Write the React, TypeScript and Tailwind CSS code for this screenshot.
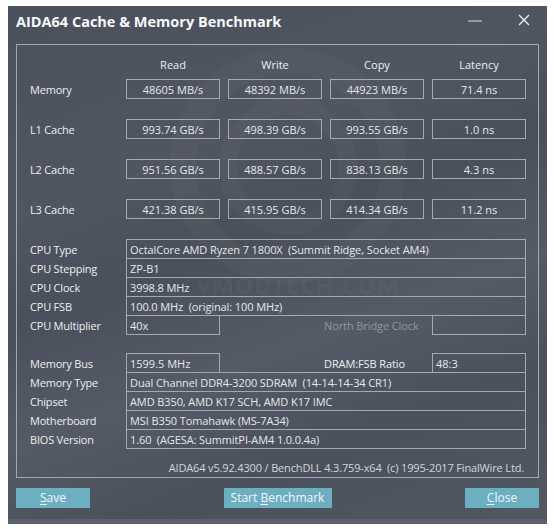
import React from "react";

const font = { fontFamily: '"Open Sans", "Noto Sans", Arial, sans-serif' };

function ValueBox({ v }: { v: string }) {
  return (
    <div className="w-[94px] h-[20px] border border-[#a4a9af] flex items-center justify-center text-[11px] text-[#e6e7e9] leading-none">
      {v}
    </div>
  );
}

function BenchRow({ label, vals, first }: { label: string; vals: string[]; first?: boolean }) {
  return (
    <div className={`flex items-center ${first ? "mt-[7px]" : "mt-[20px]"}`}>
      <div className="w-[96px] text-[11px] text-[#eceef0] leading-none tracking-[-0.2px]">{label}</div>
      <div className="flex gap-[8px]">
        {vals.map((v, i) => (
          <ValueBox key={i} v={v} />
        ))}
      </div>
    </div>
  );
}

function InfoRow({ label, value, first }: { label: string; value: string; first?: boolean }) {
  return (
    <div className={`flex items-center h-[20px] ${first ? "" : "-mt-px"}`}>
      <div className="w-[96px] text-[11px] text-[#eceef0] leading-none tracking-[-0.2px]">{label}</div>
      <div className="w-[400px] h-[20px] border border-[#a4a9af] flex items-center pl-[3px] text-[11px] text-[#e6e7e9] leading-none whitespace-pre tracking-[-0.1px]">
        {value}
      </div>
    </div>
  );
}

function SplitRow({
  label,
  value,
  midText,
  midClass,
  rightValue,
  first,
}: {
  label: string;
  value: string;
  midText: string;
  midClass: string;
  rightValue: string;
  first?: boolean;
}) {
  return (
    <div className={`flex items-center h-[20px] ${first ? "" : "-mt-px"}`}>
      <div className="w-[96px] text-[11px] text-[#eceef0] leading-none tracking-[-0.2px]">{label}</div>
      <div className="w-[94px] h-[20px] border border-[#a4a9af] flex items-center pl-[3px] text-[11px] text-[#e6e7e9] leading-none">
        {value}
      </div>
      <div className="w-[104px]" />
      <div className={`w-[108px] text-[11px] leading-none tracking-[-0.1px] ${midClass}`}>{midText}</div>
      <div className="w-[94px] h-[20px] border border-[#a4a9af] flex items-center pl-[3px] text-[11px] text-[#e6e7e9] leading-none">
        {rightValue}
      </div>
    </div>
  );
}

function Btn({ children, w }: { children: React.ReactNode; w: string }) {
  return (
    <div className={`${w} h-[20px] bg-[#6cafc1] flex items-center justify-center text-[12px] text-[#f3f6f8] leading-none`}>
      {children}
    </div>
  );
}

export default function App() {
  return (
    <div className="min-h-screen bg-white pt-[6px] pl-[8px]" style={font}>
      <div className="relative w-[539px] h-[518px] flex flex-col overflow-hidden bg-[linear-gradient(160deg,#4b515c_0%,#505661_30%,#4a505b_45%,#545a66_62%,#4b515c_78%,#515763_100%)]">
        {/* watermark */}
        <div className="absolute left-[120px] top-[30px] pointer-events-none">
          <svg width="300" height="260" viewBox="0 0 300 260">
            <circle cx="160" cy="130" r="105" fill="none" stroke="rgba(255,255,255,0.025)" strokeWidth="26" />
            <circle cx="160" cy="130" r="60" fill="none" stroke="rgba(255,255,255,0.022)" strokeWidth="18" />
          </svg>
        </div>
        <div className="absolute left-[188px] top-[262px] text-[23px] font-bold text-white/[0.045] tracking-[1px] pointer-events-none">
          VMODTECH.COM
        </div>

        {/* title bar */}
        <div className="relative h-[38px] flex items-center pl-[8px] pb-[6px]">
          <div className="text-[14.5px] font-bold text-[#f7f8f9] leading-none">AIDA64 Cache &amp; Memory Benchmark</div>
          <svg className="absolute left-[460px] top-[14px]" width="16" height="2" viewBox="0 0 16 2">
            <rect x="0" y="0.5" width="14" height="1" fill="#d9dbde" />
          </svg>
          <svg className="absolute left-[510px] top-[8px]" width="12" height="12" viewBox="0 0 12 12">
            <path d="M1 1 L11 11 M11 1 L1 11" stroke="#eef0f2" strokeWidth="1.3" />
          </svg>
        </div>

        {/* panel */}
        <div className="relative ml-[8px] w-[523px] h-[434px] border border-[#a3a8ae] pl-[13px] pt-[11px] flex flex-col">
          <div className="flex items-center h-[16px]">
            <div className="w-[96px]" />
            <div className="flex gap-[8px] text-[11px] text-[#eceef0] leading-none">
              <div className="w-[94px] text-center">Read</div>
              <div className="w-[94px] text-center">Write</div>
              <div className="w-[94px] text-center">Copy</div>
              <div className="w-[94px] text-center">Latency</div>
            </div>
          </div>
          <BenchRow first label="Memory" vals={["48605 MB/s", "48392 MB/s", "44923 MB/s", "71.4 ns"]} />
          <BenchRow label="L1 Cache" vals={["993.74 GB/s", "498.39 GB/s", "993.55 GB/s", "1.0 ns"]} />
          <BenchRow label="L2 Cache" vals={["951.56 GB/s", "488.57 GB/s", "838.13 GB/s", "4.3 ns"]} />
          <BenchRow label="L3 Cache" vals={["421.38 GB/s", "415.95 GB/s", "414.34 GB/s", "11.2 ns"]} />

          <div className="mt-[20px] flex flex-col">
            <InfoRow first label="CPU Type" value="OctalCore AMD Ryzen 7 1800X  (Summit Ridge, Socket AM4)" />
            <InfoRow label="CPU Stepping" value="ZP-B1" />
            <InfoRow label="CPU Clock" value="3998.8 MHz" />
            <InfoRow label="CPU FSB" value="100.0 MHz  (original: 100 MHz)" />
            <SplitRow
              label="CPU Multiplier"
              value="40x"
              midText="North Bridge Clock"
              midClass="text-[#8f979b]"
              rightValue=""
            />
          </div>

          <div className="mt-[18px] flex flex-col">
            <SplitRow
              first
              label="Memory Bus"
              value="1599.5 MHz"
              midText="DRAM:FSB Ratio"
              midClass="text-[#eceef0]"
              rightValue="48:3"
            />
            <InfoRow label="Memory Type" value="Dual Channel DDR4-3200 SDRAM  (14-14-14-34 CR1)" />
            <InfoRow label="Chipset" value="AMD B350, AMD K17 SCH, AMD K17 IMC" />
            <InfoRow label="Motherboard" value="MSI B350 Tomahawk (MS-7A34)" />
            <InfoRow label="BIOS Version" value="1.60  (AGESA: SummitPI-AM4 1.0.0.4a)" />
          </div>

          <div className="mt-[10px] h-[16px] flex items-center justify-end pr-[14px] text-[11px] text-[#d3d6d9] leading-none whitespace-pre tracking-[-0.15px]">
            AIDA64 v5.92.4300 / BenchDLL 4.3.759-x64  (c) 1995-2017 FinalWire Ltd.
          </div>
        </div>

        {/* buttons */}
        <div className="mt-[10px] px-[8px] flex justify-between">
          <Btn w="w-[74px]">
            <span className="underline underline-offset-2">S</span>ave
          </Btn>
          <Btn w="w-[108px]">
            Start&nbsp;<span className="underline underline-offset-2">B</span>enchmark
          </Btn>
          <Btn w="w-[74px]">
            <span className="underline underline-offset-2">C</span>lose
          </Btn>
        </div>

        <div className="flex-1" />
        <div className="h-[5px] bg-[#5a616d]" />
      </div>
    </div>
  );
}
